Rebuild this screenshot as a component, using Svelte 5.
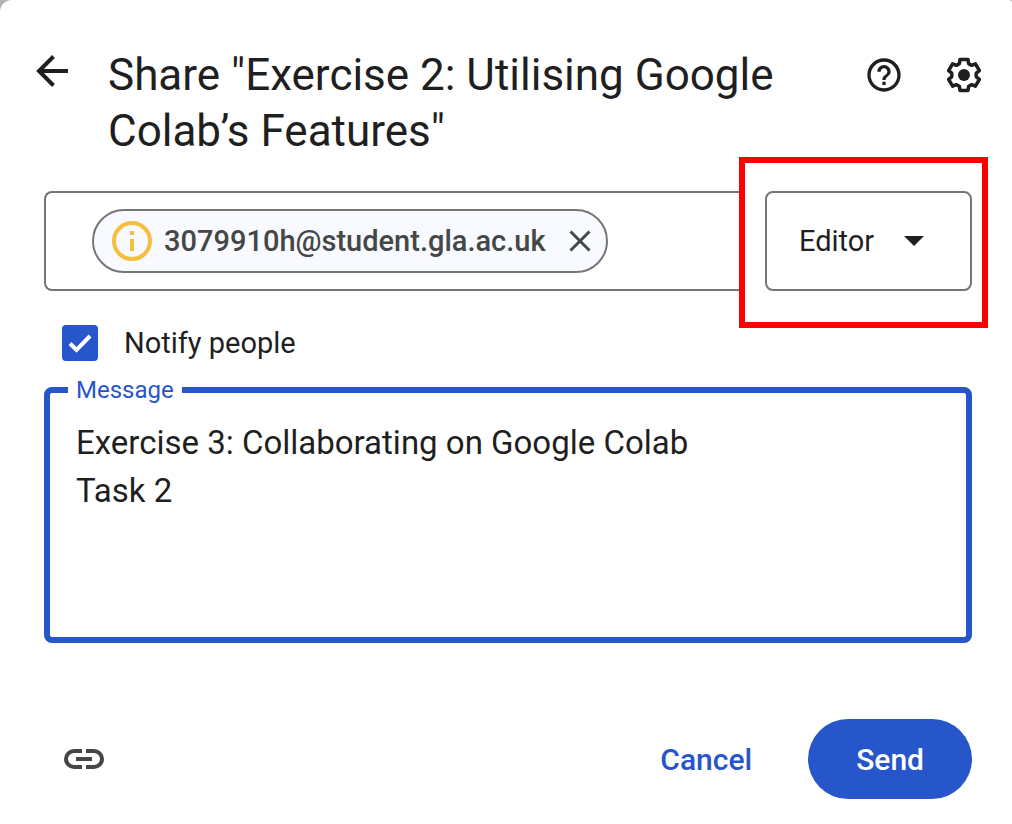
<script>
  let notify = $state(true);
  let role = $state('Editor');
  let message = $state('Exercise 3: Collaborating on Google Colab\nTask 2');
</script>

<main class="dialog">
  <header>
    <button class="icon back" type="button" aria-label="Back">
      <svg width="34" height="34" viewBox="0 0 34 34" fill="none" stroke="currentColor" stroke-width="4">
        <path d="M32 16H3M17.500 1.500L3 16l14.500 14.500" />
      </svg>
    </button>
    <h1>Share "Exercise 2: Utilising Google Colab’s Features"</h1>
    <div class="tools">
      <button class="icon" type="button" aria-label="Help">
        <svg width="40" height="40" viewBox="0 0 24 24" fill="currentColor">
          <path d="M11 18h2v-2h-2v2zm1-16C6.480 2 2 6.480 2 12s4.480 10 10 10 10-4.480 10-10S17.520 2 12 2zm0 18c-4.410 0-8-3.590-8-8s3.590-8 8-8 8 3.590 8 8-3.590 8-8 8zm0-14c-2.210 0-4 1.790-4 4h2c0-1.100.9-2 2-2s2 .9 2 2c0 2-3 1.750-3 5h2c0-2.250 3-2.500 3-5 0-2.210-1.790-4-4-4z" />
        </svg>
      </button>
      <button class="icon" type="button" aria-label="Settings">
        <svg width="40" height="40" viewBox="-20 -20 40 40">
          <path
            d="M-4-15.500L4-15.500L4.600-11.500Q6-10.400 7.700-9.700L11.400-11.200L15.400-4.300L12.300-1.800Q12 0 12.300 1.800L15.400 4.300L11.400 11.200L7.700 9.700Q6 10.400 4.600 11.500L4 15.500L-4 15.500L-4.600 11.500Q-6 10.400-7.700 9.700L-11.400 11.200L-15.400 4.300L-12.300 1.800Q-12 0-12.300-1.800L-15.400-4.300L-11.400-11.200L-7.700-9.700Q-6-10.400-4.600-11.500Z"
            fill="none" stroke="currentColor" stroke-width="3.500" stroke-linejoin="round" />
          <circle r="6" fill="currentColor" />
        </svg>
      </button>
    </div>
  </header>

  <div class="people">
    <div class="recipients">
      <div class="chip">
        <svg width="40" height="40" viewBox="0 0 40 40">
          <circle cx="20" cy="20" r="18" fill="none" stroke="#f4bf3f" stroke-width="4" />
          <path d="M18 10h4v4h-4zM18 18h4v12h-4z" fill="#f4bf3f" />
        </svg>
        <span>3079910h@student.gla.ac.uk</span>
        <button class="icon" type="button" aria-label="Remove recipient">
          <svg width="22" height="22" viewBox="0 0 22 22" fill="none" stroke="#444746" stroke-width="3">
            <path d="M1.500 1.500l19 19M20.500 1.500l-19 19" />
          </svg>
        </button>
      </div>
    </div>
    <div class="role">
      <select aria-label="Role" bind:value={role}>
        <option>Viewer</option>
        <option>Commenter</option>
        <option>Editor</option>
      </select>
      <svg width="20" height="10" viewBox="0 0 20 10"><path d="M0 0h20L10 10z" fill="#1f1f1f" /></svg>
      <span class="highlight"></span>
    </div>
  </div>

  <label class="notify">
    <span class="check">
      <input type="checkbox" bind:checked={notify} />
      {#if notify}
        <svg width="24" height="20" viewBox="0 0 24 20" fill="none" stroke="#fff" stroke-width="4">
          <path d="M2 10.500l6.500 6.500L22 3" />
        </svg>
      {/if}
    </span>
    Notify people
  </label>

  <fieldset>
    <legend><label for="message">Message</label></legend>
    <textarea id="message" bind:value={message} spellcheck="false"></textarea>
  </fieldset>

  <footer>
    <button class="icon link" type="button" aria-label="Copy link">
      <svg width="40" height="20" viewBox="0 0 40 20" fill="none" stroke="#444746" stroke-width="4">
        <path d="M18 2h-8a8 8 0 0 0 0 16h8M22 2h8a8 8 0 0 1 0 16h-8M12 10h16" />
      </svg>
    </button>
    <div class="actions">
      <button class="cancel" type="button">Cancel</button>
      <button class="send" type="button">Send</button>
    </div>
  </footer>
</main>

<style>
  :global(body) {
    margin: 0;
    background: #b4b4b4;
  }
  .dialog {
    box-sizing: border-box;
    min-height: 100vh;
    padding: 47px 40px 24px 44px;
    border-radius: 12px 3px 0 0;
    background: #fff;
    color: #1f1f1f;
    font-family: Roboto, sans-serif;
    font-size: 29px;
  }
  button,
  select,
  textarea {
    margin: 0;
    border: 0;
    background: none;
    color: inherit;
    font: inherit;
  }
  .icon {
    display: flex;
    padding: 0;
    cursor: pointer;
  }
  svg {
    display: block;
    flex: none;
  }
  header {
    display: flex;
    align-items: flex-start;
    margin: 0 -12px 0 -8px;
  }
  .back {
    padding-top: 8px;
    margin-right: 38px;
  }
  h1 {
    flex: 1;
    margin: 0;
    font-size: 44px;
    font-weight: 400;
    line-height: 56px;
  }
  .tools {
    display: flex;
    gap: 40px;
    padding-top: 8px;
    margin-left: 40px;
  }
  .people {
    display: flex;
    gap: 24px;
    margin-top: 32px;
  }
  .recipients {
    box-sizing: border-box;
    flex: 1;
    height: 100px;
    display: flex;
    align-items: center;
    padding-left: 46px;
    border: 2px solid #747775;
    border-right: 0;
    border-radius: 8px 0 0 8px;
  }
  .chip {
    display: flex;
    align-items: center;
    gap: 12px;
    box-sizing: border-box;
    height: 64px;
    padding: 0 15px 0 18px;
    border: 2px solid #747775;
    border-radius: 32px;
    background: #f8faff;
    color: #444746;
    font-weight: 500;
  }
  .chip .icon {
    margin-left: 11px;
  }
  .role {
    position: relative;
    display: grid;
    align-items: center;
    width: 207px;
  }
  .role > * {
    grid-area: 1 / 1;
  }
  .role svg {
    justify-self: end;
    margin-right: 48px;
    pointer-events: none;
  }
  select {
    appearance: none;
    box-sizing: border-box;
    width: 100%;
    height: 100px;
    padding: 0 32px;
    border: 2px solid #747775;
    border-radius: 8px;
  }
  .highlight {
    position: absolute;
    inset: -34px -16px -37px -26px;
    border: 6px solid #f00;
    pointer-events: none;
  }
  .notify {
    display: flex;
    align-items: center;
    gap: 26px;
    width: max-content;
    margin: 34px 0 0 18px;
    line-height: 36px;
  }
  .check {
    display: grid;
    place-items: center;
  }
  .check > * {
    grid-area: 1 / 1;
  }
  input {
    appearance: none;
    width: 36px;
    height: 36px;
    margin: 0;
    border: 2px solid #2756cb;
    border-radius: 4px;
  }
  input:checked {
    background: #2756cb;
  }
  .check svg {
    pointer-events: none;
  }
  fieldset {
    margin: 14px 0 0;
    padding: 0 26px 8px;
    border: 6px solid #2756cb;
    border-radius: 8px;
  }
  legend {
    margin-left: -8px;
    padding: 0 8px;
    color: #2756cb;
    font-size: 24px;
    line-height: 30px;
  }
  textarea {
    display: block;
    width: 100%;
    height: 224px;
    padding: 14px 0 0;
    box-sizing: border-box;
    outline: 0;
    resize: none;
    font-size: 33px;
    line-height: 48px;
  }
  footer {
    display: flex;
    align-items: center;
    justify-content: space-between;
    margin-top: 76px;
  }
  .link {
    margin-left: 20px;
  }
  .actions {
    display: flex;
    gap: 32px;
    font-size: 30px;
    font-weight: 500;
  }
  .actions button {
    height: 80px;
    border-radius: 40px;
    cursor: pointer;
  }
  .cancel {
    padding: 0 24px;
    color: #2756cb;
  }
  .send {
    padding: 0 48px;
    background: #2756cb;
    color: #fff;
  }
</style>
